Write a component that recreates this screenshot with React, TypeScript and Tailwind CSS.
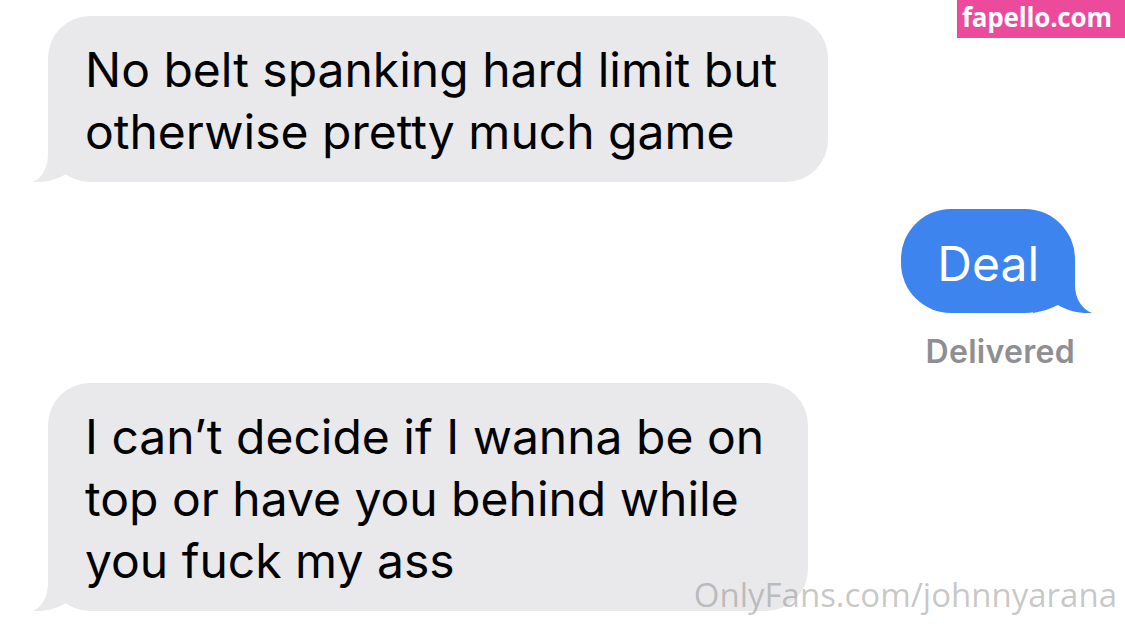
import React from "react";

const GrayTail = () => (
  <svg
    className="absolute left-[-16px] bottom-0"
    width="60"
    height="50"
    viewBox="0 0 60 50"
  >
    <path
      d="M16,0 L16,22 C16,36 10,46 1,50 C14,51 26,47 34,42 C40,45 48,48 60,50 L60,0 Z"
      fill="#e9e9eb"
    />
  </svg>
);

const BlueTail = () => (
  <svg
    className="absolute right-[-18px] bottom-0 -scale-x-100"
    width="60"
    height="50"
    viewBox="0 0 60 50"
  >
    <path
      d="M18,0 L18,22 C18,36 11,46 1,50 C14,51 27,47 35,42 C41,45 49,48 60,50 L60,0 Z"
      fill="#3d84ef"
    />
  </svg>
);

export default function App() {
  return (
    <div
      className="relative w-[1125px] h-[626px] bg-white overflow-hidden"
      style={{ fontFamily: "Inter, 'Noto Sans', sans-serif" }}
    >
      <div className="flex flex-col pt-[16px]">
        <div className="relative ml-[48px] w-[780px] rounded-[42px] bg-[#e9e9eb] pl-[37px] pt-[23px] pb-[19px]">
          <GrayTail />
          <p className="relative text-[48px] leading-[62px] text-black whitespace-nowrap">
            No belt spanking hard limit but
            <br />
            otherwise pretty much game
          </p>
        </div>

        <div className="relative self-end mr-[50px] mt-[27px] rounded-[50px] bg-[#3d84ef] px-[36px] pt-[24px] pb-[18px]">
          <BlueTail />
          <p className="relative text-[48px] leading-[62px] text-white whitespace-nowrap">
            Deal
          </p>
        </div>

        <div className="self-end mr-[50px] mt-[21px] text-[32px] leading-[36px] font-semibold text-[#8e8e93] tracking-[0.3px]">
          Delivered
        </div>

        <div className="relative ml-[48px] mt-[13px] w-[760px] rounded-[42px] bg-[#e9e9eb] pl-[37px] pt-[23px] pb-[19px]">
          <GrayTail />
          <p className="relative text-[48px] leading-[62px] text-black whitespace-nowrap">
            I can’t decide if I wanna be on
            <br />
            top or have you behind while
            <br />
            you fuck my ass
          </p>
        </div>
      </div>

      <div
        className="absolute top-0 right-0 h-[38px] w-[168px] bg-[#ec4a9b] flex items-center pl-[5px]"
        style={{ fontFamily: "'Open Sans', sans-serif" }}
      >
        <span className="text-[26px] leading-[30px] font-bold text-white tracking-[-0.2px] whitespace-nowrap -mt-[4px]">
          fapello.com
        </span>
      </div>

      <div
        className="absolute top-[579px] right-[8px] text-[33px] leading-[32px] text-[rgba(130,130,130,0.45)] whitespace-nowrap"
        style={{ fontFamily: "'Open Sans', sans-serif" }}
      >
        OnlyFans.com/johnnyarana
      </div>
    </div>
  );
}
